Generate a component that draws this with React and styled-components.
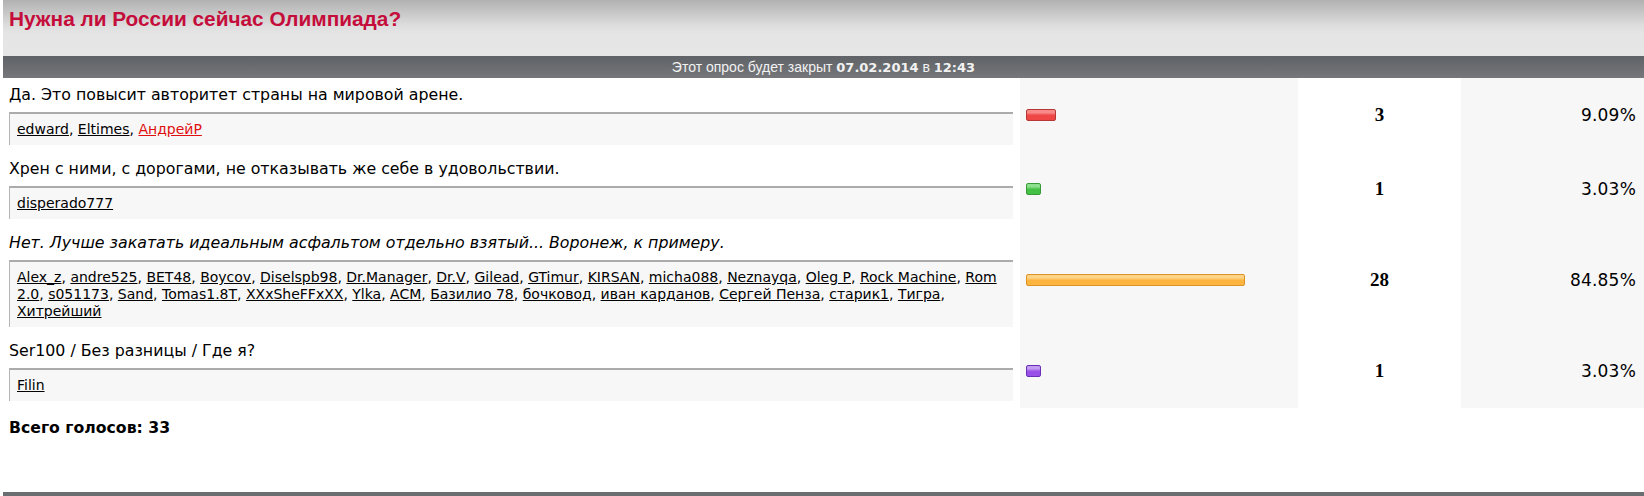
import React from "react";
import styled, { createGlobalStyle } from "styled-components";

const Global = createGlobalStyle`
  html, body { margin: 0; padding: 0; background: #fff; }
  body { font-family: "DejaVu Sans", Verdana, sans-serif; color: #000; }
`;

const Page = styled.div`
  margin-left: 3px;
  width: 1641px;
`;

const Header = styled.div`
  height: 56px;
  box-sizing: border-box;
  padding: 7px 0 0 6px;
  background: linear-gradient(to bottom, #b1b1b1 0px, #c6c6c6 12px, #dedede 26px, #e5e5e5 34px, #e6e6e6 100%);
`;

const Title = styled.h1`
  margin: 0;
  font-family: "Liberation Sans", Arial, sans-serif;
  font-weight: bold;
  font-size: 20.8px;
  line-height: 24px;
  color: #c50d3b;
`;

const CloseBar = styled.div`
  height: 22px;
  line-height: 22px;
  text-align: center;
  font-family: "Liberation Sans", Arial, sans-serif;
  font-size: 14px;
  color: #f2f2f2;
  background: linear-gradient(to bottom, #5f6266, #75777a);
  b { font-family: "DejaVu Sans", Verdana, sans-serif; font-size: 13px; }
`;

const Grid = styled.div`
  display: grid;
  grid-template-columns: 1017px 278px 163px 1fr;
`;

const OptionCell = styled.div`
  padding: 7px 7px 7px 6px;
`;

const Question = styled.div`
  font-size: 15.8px;
  line-height: 20px;
  font-style: ${(p) => (p.$italic ? "italic" : "normal")};
`;

const Voters = styled.div`
  margin-top: 7px;
  background: #f7f7f7;
  border-top: 2px solid #ababab;
  border-left: 1px solid #b5b5b5;
  padding: 7px 3px 7px 7px;
  font-size: 14px;
  line-height: 17px;
`;

const Name = styled.a`
  color: ${(p) => (p.$red ? "#e01010" : "#000")};
  text-decoration: underline;
`;

const BarCell = styled.div`
  background: #f7f7f7;
  display: flex;
  align-items: center;
  padding-left: 6px;
`;

const Bar = styled.div`
  height: 12px;
  box-sizing: border-box;
  border-radius: 2px;
  border: 1px solid ${(p) => p.$border};
  background: linear-gradient(to bottom, ${(p) => p.$light} 0%, ${(p) => p.$light} 25%, ${(p) => p.$base} 55%, ${(p) => p.$base} 100%);
`;

const VotesCell = styled.div`
  display: flex;
  align-items: center;
  justify-content: center;
  font-family: "Liberation Serif", "Times New Roman", serif;
  font-weight: bold;
  font-size: 19px;
  background: #fff;
`;

const PercentCell = styled.div`
  display: flex;
  align-items: center;
  justify-content: flex-end;
  padding-right: 8px;
  font-size: 17px;
  letter-spacing: 0.2px;
  background: #f7f7f7;
`;

const Total = styled.div`
  padding: 10px 0 0 6px;
  font-weight: bold;
  font-size: 15.7px;
  line-height: 20px;
`;

const Footer = styled.div`
  margin-top: 54px;
  height: 20px;
  background: #6b6e70;
`;

const colors = {
  red: { base: "#ee4545", light: "#f88a8a", border: "#b73636" },
  green: { base: "#44c044", light: "#8de08d", border: "#379a37" },
  orange: { base: "#fdb53f", light: "#fed486", border: "#dd9226" },
  purple: { base: "#9950e6", light: "#c39cf3", border: "#6a2fb6" },
};

const options = [
  {
    q: "Да. Это повысит авторитет страны на мировой арене.",
    names: [["edward"], ["Eltimes"], ["АндрейР", true]],
    color: "red",
    width: 30,
    votes: 3,
    pct: "9.09%",
  },
  {
    q: "Хрен с ними, с дорогами, не отказывать же себе в удовольствии.",
    names: [["disperado777"]],
    color: "green",
    width: 15,
    votes: 1,
    pct: "3.03%",
  },
  {
    q: "Нет. Лучше закатать идеальным асфальтом отдельно взятый... Воронеж, к примеру.",
    italic: true,
    names: [
      "Alex_z", "andre525", "BET48", "Boycov", "Diselspb98", "Dr.Manager", "Dr.V", "Gilead",
      "GTimur", "KIRSAN", "micha088", "Neznayqa", "Oleg P", "Rock Machine", "Rom 2.0",
      "s051173", "Sand", "Tomas1.8T", "XXxSheFFxXX", "Ylka", "ACM", "Базилио 78", "бочковод",
      "иван карданов", "Сергей Пенза", "старик1", "Тигра", "Хитрейший",
    ].map((n) => [n]),
    color: "orange",
    width: 219,
    votes: 28,
    pct: "84.85%",
  },
  {
    q: "Ser100 / Без разницы / Где я?",
    names: [["Filin"]],
    color: "purple",
    width: 15,
    votes: 1,
    pct: "3.03%",
  },
];

export default function App() {
  return (
    <>
      <Global />
      <Page>
        <Header>
          <Title>Нужна ли России сейчас Олимпиада?</Title>
        </Header>
        <CloseBar>
          Этот опрос будет закрыт <b>07.02.2014</b> в <b>12:43</b>
        </CloseBar>
        <Grid>
          {options.map((o, i) => {
            const c = colors[o.color];
            return (
              <React.Fragment key={i}>
                <OptionCell>
                  <Question $italic={o.italic}>{o.q}</Question>
                  <Voters>
                    {o.names.map(([n, red], j) => (
                      <React.Fragment key={j}>
                        <Name href="#" $red={red}>{n}</Name>
                        {j < o.names.length - 1 ? ", " : ""}
                      </React.Fragment>
                    ))}
                  </Voters>
                </OptionCell>
                <BarCell>
                  <Bar $base={c.base} $light={c.light} $border={c.border} style={{ width: o.width }} />
                </BarCell>
                <VotesCell>{o.votes}</VotesCell>
                <PercentCell>{o.pct}</PercentCell>
              </React.Fragment>
            );
          })}
        </Grid>
        <Total>Всего голосов: 33</Total>
        <Footer />
      </Page>
    </>
  );
}
